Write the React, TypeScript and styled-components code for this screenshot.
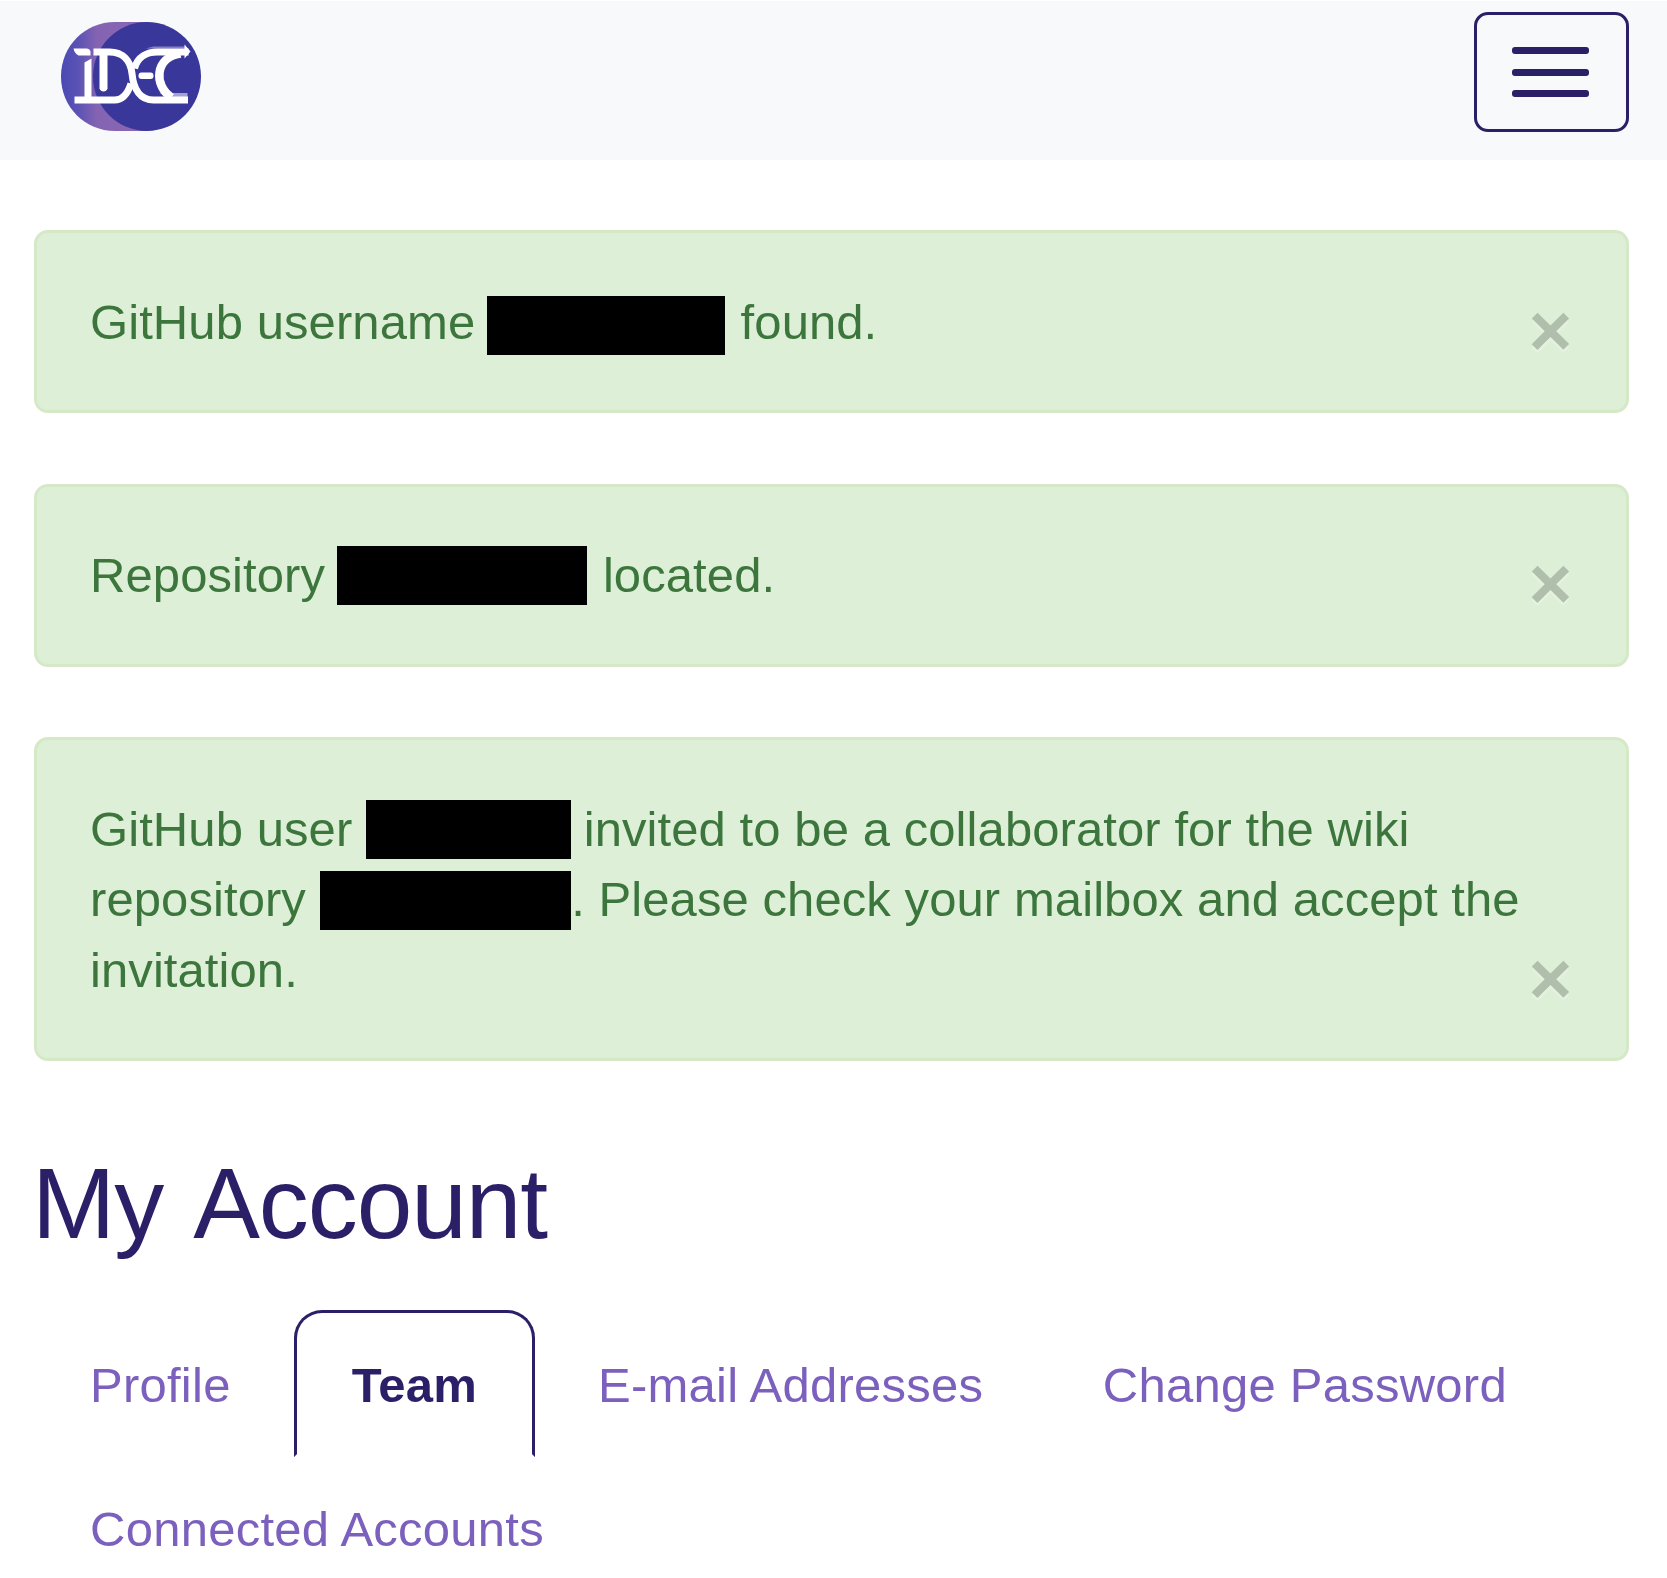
import React from 'react';
import styled, { createGlobalStyle } from 'styled-components';

const GlobalStyle = createGlobalStyle`
  *, *::before, *::after { box-sizing: border-box; }
  body {
    margin: 0;
    background: #fff;
    font: 49px/70.5px "Liberation Sans", Arial, sans-serif;
    overflow: hidden;
  }
`;

const Page = styled.div`
  width: 1667px;
  height: 1578px;
  overflow: hidden;
`;

const Navbar = styled.header`
  display: flex;
  align-items: flex-start;
  justify-content: space-between;
  height: 160px;
  padding: 11px 38px 0 61px;
  border-top: 1px solid #fff;
  background: #f8f9fb;
`;

const Logo = styled.svg`
  display: block;
  width: 140px;
  height: 110px;
  margin-top: 10px;
`;

const Toggler = styled.button`
  display: flex;
  flex-direction: column;
  align-items: center;
  width: 155px;
  height: 120px;
  padding: 32px 0 0;
  border: 3px solid #2b1f68;
  border-radius: 14px;
  background: transparent;
`;

const Bar = styled.span<{ $gap?: number }>`
  width: 77px;
  height: 7px;
  margin: 0 2px ${(p) => p.$gap ?? 0}px 0;
  border-radius: 3px;
  background: #2b1f68;
`;

const Main = styled.main`
  padding: 70px 38px 0 34px;
`;

const Alert = styled.div`
  display: flex;
  align-items: flex-end;
  margin-bottom: 70.5px;
  padding: 53.5px 51px 53px 53px;
  border: 3px solid #d5e9c6;
  border-radius: 14px;
  background: #deefd8;
  color: #3c763d;
`;

const Message = styled.div`
  flex: 1;
  min-width: 0;
  letter-spacing: 0.08px;
  white-space: nowrap;
`;

const Redacted = styled.span<{ $w: number; $drop?: number; $before?: number; $after?: number }>`
  display: inline-block;
  width: ${(p) => p.$w}px;
  height: 59px;
  margin: -10px ${(p) => p.$after ?? 0}px 0 ${(p) => p.$before ?? -1.5}px;
  vertical-align: -${(p) => p.$drop ?? 13}px;
  background: #000;
`;

const Close = styled.button`
  flex: none;
  width: 49px;
  height: 70px;
  margin-bottom: -7.5px;
  padding: 0;
  border: 0;
  background: none;
  color: #000;
  font: bold 75px/70px "Liberation Sans", Arial, sans-serif;
  text-align: center;
  text-shadow: 0 3px 0 #fff;
  opacity: 0.2;
`;

const Title = styled.h1`
  margin: 0 0 0 -2px;
  padding-top: 13px;
  color: #2b1f68;
  font-size: 100px;
  font-weight: 400;
  line-height: 116px;
  letter-spacing: -1.1px;
  word-spacing: 9px;
`;

const Tabs = styled.nav`
  display: flex;
  flex-wrap: wrap;
  column-gap: 7.5px;
  margin-top: 49px;
  letter-spacing: 0.25px;
`;

const Tab = styled.a<{ $active?: boolean }>`
  height: 147px;
  margin-bottom: -3px;
  padding: 37px ${(p) => (p.$active ? 54.5 : 53)}px 35px;
  border: 3px solid ${(p) => (p.$active ? '#2b1f68' : 'transparent')};
  border-bottom-color: transparent;
  border-radius: 28px 28px 0 0;
  color: ${(p) => (p.$active ? '#2b1f68' : '#7c60bd')};
  font-weight: ${(p) => (p.$active ? 700 : 400)};
  white-space: nowrap;
`;

function Brand() {
  return (
    <Logo viewBox="0 0 140 110" role="img" aria-label="IDEC">
      <defs>
        <linearGradient id="crescent" x1="0" x2="1">
          <stop offset="0" stopColor="#4a4ab5" />
          <stop offset="0.2" stopColor="#5b52b4" />
          <stop offset="0.42" stopColor="#8464b2" />
          <stop offset="1" stopColor="#8a66b3" />
        </linearGradient>
      </defs>
      <path d="M54 0H86V109H54C24 109 0 85 0 54.500S24 0 54 0Z" fill="url(#crescent)" />
      <ellipse cx="86" cy="54.500" rx="54" ry="54.500" fill="#3a379a" />
      <g transform="translate(0.5 -1.5)">
        <path d="M92 26H123L126 28H84Z" fill="#8581c5" />
        <path d="M98 72.500H126V77H106Z" fill="#a7a1d4" />
        <g fill="#fff">
          <path d="M12 28H25Q28 28 29 31V35H17Q13 33 12 28Z" />
          <path d="M23 80V42L30 38V80Z" />
          <path d="M38 33H46V68Q45 71 42 71Q39 71 38 68Z" />
          <rect x="77" y="52" width="15" height="6.500" rx="3" />
          <path d="M123 24L129 31L123 38Z" />
        </g>
        <g fill="none" stroke="#fff" strokeWidth="7" strokeLinejoin="round">
          <path d="M32 31.500H48C62 31.500 69 41 70.500 53C72 69 79 79.500 92 79.500H126.500" />
          <path d="M13 79.500H53C61 79.500 66 74 69.500 63" />
          <path d="M73 48C76 36 86 31.500 96 31.500H127" />
          <path d="M119 33C93 37 92 65 110 77" strokeWidth="8.500" />
        </g>
      </g>
    </Logo>
  );
}

export default function App() {
  return (
    <Page>
      <GlobalStyle />
      <Navbar>
        <Brand />
        <Toggler aria-label="Toggle navigation">
          <Bar $gap={15} />
          <Bar $gap={14} />
          <Bar />
        </Toggler>
      </Navbar>
      <Main>
        <Alert>
          <Message>
            GitHub username <Redacted $w={238} $drop={16} $after={1.5} /> found.
          </Message>
          <Close aria-label="Close">×</Close>
        </Alert>
        <Alert>
          <Message>
            Repository <Redacted $w={250} $after={2} /> located.
          </Message>
          <Close aria-label="Close">×</Close>
        </Alert>
        <Alert>
          <Message>
            GitHub user <Redacted $w={205} $before={0} $after={-1} /> invited to be a collaborator for the wiki
            <br />
            repository <Redacted $w={251} $before={0.5} $drop={14} />. Please check your mailbox and accept the
            <br />
            invitation.
          </Message>
          <Close aria-label="Close">×</Close>
        </Alert>
        <Title>My Account</Title>
        <Tabs>
          <Tab>Profile</Tab>
          <Tab $active>Team</Tab>
          <Tab>E-mail Addresses</Tab>
          <Tab>Change Password</Tab>
          <Tab>Connected Accounts</Tab>
        </Tabs>
      </Main>
    </Page>
  );
}
